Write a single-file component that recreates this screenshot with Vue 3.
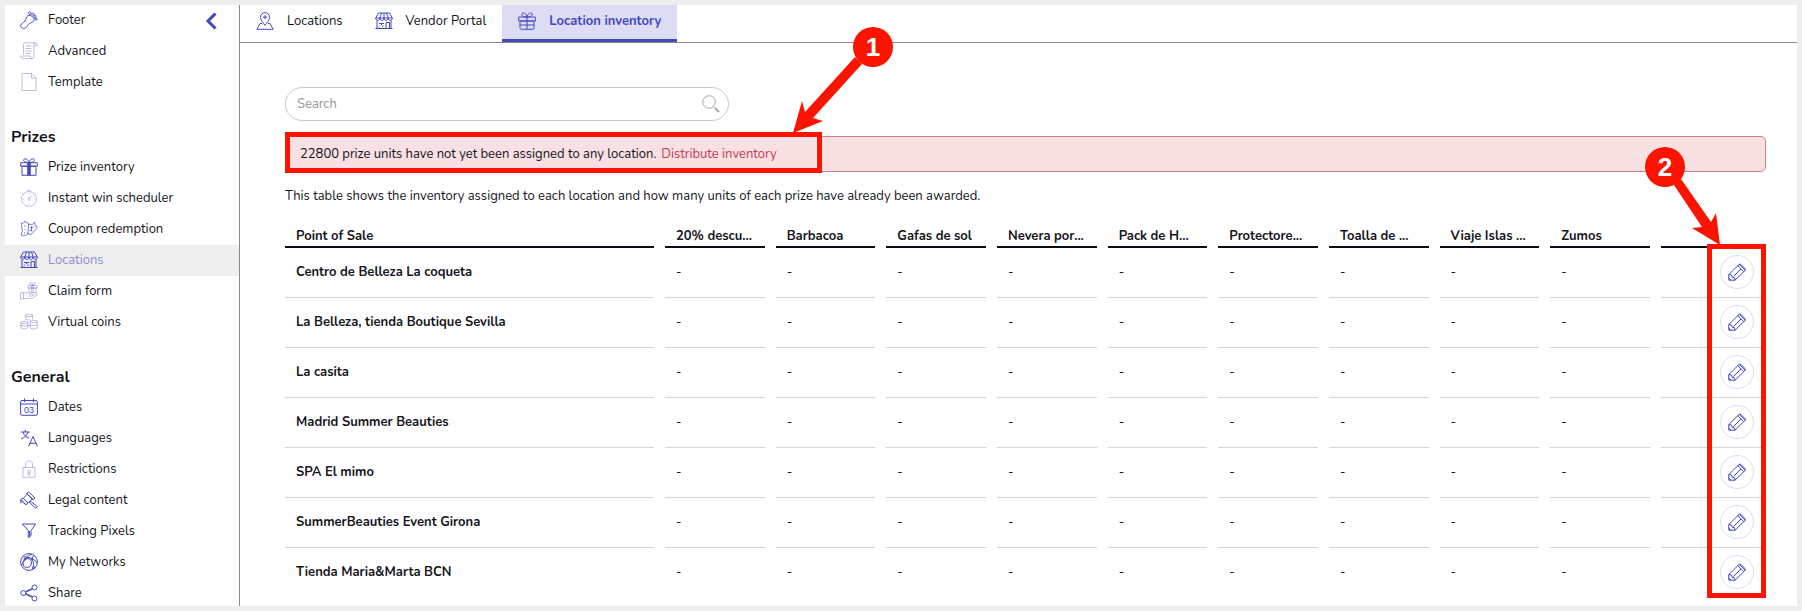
<template>
  <div class="app">
    <nav class="sidebar">
      <button class="collapse" type="button" aria-label="Collapse menu">
        <svg viewBox="0 0 12 18"><path d="M10.500 1.500 3 9l7.500 7.500" /></svg>
      </button>
      <section v-for="group in menu" :key="group.items[0].label" class="group">
        <h2 v-if="group.title">{{ group.title }}</h2>
        <ul>
          <li v-for="item in group.items" :key="item.label">
            <a href="#" :class="{ active: item.label === 'Locations' }">
              <svg class="icon" :class="item.tone" viewBox="0 0 18 18">
                <path :d="icons[item.icon]" />
                <text v-if="item.icon === 'calendar'" x="9" y="15">03</text>
              </svg>
              {{ item.label }}
            </a>
          </li>
        </ul>
      </section>
    </nav>

    <div class="content">
      <nav class="tabs">
        <a v-for="tab in tabs" :key="tab.label" href="#" :class="{ current: tab.current }">
          <svg class="icon" viewBox="0 0 18 18"><path :d="icons[tab.icon]" /></svg>
          {{ tab.label }}
        </a>
      </nav>

      <main>
        <form class="search" @submit.prevent>
          <input v-model="query" type="text" placeholder="Search" aria-label="Search" />
          <button type="submit" aria-label="Run search">
            <svg viewBox="0 0 18 18">
              <circle cx="7" cy="7" r="6.300" />
              <path d="m11.500 11.500 1.500 1.500" />
              <path class="handle" d="m13 13 4 4" />
            </svg>
          </button>
        </form>

        <div class="alert">
          <span>22800 prize units have not yet been assigned to any location.</span>
          <a href="#">Distribute inventory</a>
          <div class="mark mark-alert"></div>
          <svg class="arrow arrow-alert" viewBox="0 0 110 112">
            <path d="M8 109 17 77l3 11 50-55 7 7-49 54 10 3z" />
            <circle cx="88" cy="23" r="20" />
            <text x="88" y="32">1</text>
          </svg>
        </div>

        <p class="intro">
          This table shows the inventory assigned to each location and how many units of each prize have already been awarded.
        </p>

        <div class="inventory">
          <table>
            <thead>
              <tr>
                <th class="name">Point of Sale</th>
                <th v-for="prize in prizes" :key="prize">{{ prize }}</th>
                <th class="actions"></th>
              </tr>
            </thead>
            <tbody>
              <tr v-for="place in places" :key="place">
                <td class="name">{{ place }}</td>
                <td v-for="prize in prizes" :key="prize">-</td>
                <td class="actions">
                  <button type="button" :aria-label="'Edit ' + place">
                    <svg class="icon" viewBox="0 0 18 18"><path :d="icons.pencil" /></svg>
                  </button>
                </td>
              </tr>
            </tbody>
          </table>
          <div class="mark mark-edit"></div>
          <svg class="arrow arrow-edit" viewBox="0 0 100 110">
            <path d="M80 105 52 88l10-1-28-42 7-6 30 43 5-9z" />
            <circle cx="25" cy="27" r="20" />
            <text x="25" y="36">2</text>
          </svg>
        </div>
      </main>
    </div>
  </div>
</template>

<script setup>
import { ref } from "vue";

const query = ref("");

const menu = [
  {
    items: [
      { label: "Footer", icon: "foot" },
      { label: "Advanced", icon: "scroll", tone: "pale" },
      { label: "Template", icon: "page", tone: "pale" }
    ]
  },
  {
    title: "Prizes",
    items: [
      { label: "Prize inventory", icon: "giftBold" },
      { label: "Instant win scheduler", icon: "timer", tone: "pale" },
      { label: "Coupon redemption", icon: "coupon", tone: "soft" },
      { label: "Locations", icon: "store" },
      { label: "Claim form", icon: "claim", tone: "pale" },
      { label: "Virtual coins", icon: "coins", tone: "pale" }
    ]
  },
  {
    title: "General",
    items: [
      { label: "Dates", icon: "calendar" },
      { label: "Languages", icon: "languages" },
      { label: "Restrictions", icon: "lock", tone: "pale" },
      { label: "Legal content", icon: "gavel" },
      { label: "Tracking Pixels", icon: "funnel" },
      { label: "My Networks", icon: "network" },
      { label: "Share", icon: "share" }
    ]
  }
];

const tabs = [
  { label: "Locations", icon: "pin" },
  { label: "Vendor Portal", icon: "store" },
  { label: "Location inventory", icon: "gift", current: true }
];

const prizes = [
  "20% descu...",
  "Barbacoa",
  "Gafas de sol",
  "Nevera por...",
  "Pack de H...",
  "Protectore...",
  "Toalla de ...",
  "Viaje Islas ...",
  "Zumos"
];

const places = [
  "Centro de Belleza La coqueta",
  "La Belleza, tienda Boutique Sevilla",
  "La casita",
  "Madrid Summer Beauties",
  "SPA El mimo",
  "SummerBeauties Event Girona",
  "Tienda Maria&Marta BCN"
];

// line icons on an 18x18 grid
const icons = {
  foot: "M7 5.500C8.500 3.500 12 4.500 13.500 7c1.500 2.500-.5 4-3 5-2 1-2.500 2-3.500 3.700C5.500 18 1.500 18 .8 15.500c-.6-2 1-3 2.700-4C6 10 5.500 7.500 7 5.500zM8.500 1.500a1.400 1.400 0 1 1 2.500 1.300 1.400 1.400 0 1 1-2.500-1.300M12 2.700a1.100 1.100 0 1 1 2 1 1.100 1.100 0 1 1-2-1M14 5.200a1 1 0 1 1 2 .5 1 1 0 1 1-2-.5M15 8a1 1 0 1 1 2 .3 1 1 0 1 1-2-.3",
  scroll: "M3.500 12.500v-10c0-1 .6-1.700 1.500-1.700h10.500c1 0 1.700.8 1.700 2v1h-3M15.500.8c-1 0-1.600.8-1.600 2v12c0 1.200-.8 1.900-1.900 1.900-1.300 0-1.600-1.400-1.600-2.700H.8c0 1.700.6 2.700 2 2.700H12M5.500 4h6M5.500 6.500h6M5.500 9h6M5.500 11.500h5",
  page: "M2 .5h9.500L16 5v12.500H2zM11.500.5V5H16",
  gift: "M.7 5h16.600v4H.7zM2 9h14v6.800q0 1.500-1.500 1.500h-11Q2 17.300 2 15.800zM9 5v12.300M2 13h14M9 5C6 5 3.500 4 3.800 2.200 4.200 0 8 .5 9 5zM9 5c3 0 5.500-1 5.200-2.800C13.800 0 10 .5 9 5z",
  giftBold: "M.7 4.700h16.600v3.500H.7zM2 8.200h14v9.100H2zM7.700 4.700v12.600M8.500 4.700v12.600M9.500 4.700v12.600M10.300 4.700v12.600M9 4.500C6 4.500 3 3.500 3.600 1.900 4.300 0 8 .5 9 4.500zM9 4.500c3 0 6-1 5.400-2.600C13.700 0 10 .5 9 4.500z",
  timer: "M1.500 10a7.500 7.500 0 1 1 15 0 7.500 7.500 0 1 1-15 0M8 2.500V1.800a1 1 0 1 1 2 0v.7M8 10a1.200 1.200 0 1 1 2 .8A1.200 1.200 0 0 1 8 10M10 9l2.500-2.500M9 4v1M9 15v1M3 10h1M14 10h1M2.500 4.500l1 1M15.500 4.500l-1 1",
  coupon: "M1.500 3c1.200.8 2.500 0 2.700-1.500l3 1c0 .8.600 1.300 1.500 1L8 13l-2 2.800c-.8-1-2-.9-2.500 0L1 15l1-3c1-.6.800-1.500 0-2zM8.500 5 11 4c.3 1.200 1.800 1 2-.5l1.500-1.300.8 2.500c-.6 1 .3 2 1.300 1.500L17 8.500 11.500 14l-2.500.5c0-1.200-1-1.800-2-1M4 5.500l1.500 1M4.500 9l1 1M10 8l3.500-1M9.500 10.500l3 .5M11.500 6v5M4 12.500l1 .5",
  store: "M3.500 1h11l2.800 5H.7zM.7 6c0 3.200 4 3.200 4.100 0 .2 3.200 4.100 3.200 4.200 0 .1 3.200 4 3.200 4.200 0 .1 3.200 4.100 3.200 4.100 0M4.800 6l1.700-5M9 6V1M13.200 6l-1.700-5M2 8.500v8M16 8.500v8M.5 16.500h17M11 16.500v-6h3.500v6M4 11.500h5M4 14.500l1-1M6 13l1-1M7 15l1.500-1.500M4 16.500v-1",
  claim: "M.5 10.500h3v6.500h-3zM3.500 11.500c2-1.500 4-.8 5.500.5h2.500c1.500 0 1.500 2 0 2H8M12.500 13.500l3-1.700c1.500-.7 2.500.8 1 1.800L12 16.500H3.500M8 3.500h9V6H8zM9 6h7v4.500H9zM11.700 3.500v7M13.300 3.500v7M12.500 3.500C10 3.500 8.500.5 10.500.5c1 0 2 1.500 2 3 0-1.500 1-3 2-3 2 0 .5 3-2 3",
  coins: "M5.500 2.500c0-1.500 7-1.500 7 0s-7 1.500-7 0v3.200c0 1.200 3 1.500 4.500 1.200M12.500 2.500v4M.8 9.500c0-1.500 7-1.500 7 0s-7 1.500-7 0v5.200c0 1.500 7 1.500 7 0V9.500M.8 12c0 1.500 7 1.500 7 0M10.200 8.500c0-1.500 7-1.500 7 0s-7 1.500-7 0v6.200c0 1.500 7 1.500 7 0V8.500M10.200 11.500c0 1.500 7 1.500 7 0M7.800 12.500h2.400",
  calendar: "M2 2.500h14q1.400 0 1.400 1.400v12q0 1.400-1.400 1.400H2q-1.400 0-1.400-1.400v-12Q.6 2.500 2 2.500zM.6 6h16.800M4.500.5v3.500M13.500.5v3.500",
  languages: "M.8 3h9M5.300.8V3M8 3C7.500 5.500 5 8.500 1 10M2.700 3C4 6 6 8 9 9.200M8.500 17.500 13 7.500l4.500 10M10 14.300h6",
  lock: "M3 7.500h12v9.800H3zM5.500 7.500V4.300C5.500-.3 12.500-.3 12.500 4.300v3.200M7.700 11.500a1.300 1.300 0 1 1 2.600 0 1.300 1.300 0 1 1-2.600 0M8 13v1.800h2V13",
  gavel: "M1 8.500 3 7l5 5-2 1.800zM8.500.8 15 7l-2 1.700L6.500 2.500zM3.800 6.800l3.700-3.600M8.500 11.500 12 8M10 9.800l7.300 5.700-1.500 1.800L9 11M1 12.500l-.3-3.500M.6 8.800l5.200 5.100M6.700 2.300 13 8.500",
  funnel: "M2.300 2h13.400L11 8.500v5.200l-2.700 2V8.500zM9.600 9v5.500",
  network: "M.6 9a8.400 8.400 0 1 1 16.800 0A8.400 8.400 0 1 1 .6 9M3.500 4c3-.5 6 .5 8.500 2M12 1.200c-3 .8-5.500 2.500-7.200 5.300M12 6c2 3.500 2 7 .5 10.500M1.500 12.500C2.500 10 4 8 6 6M4.500 6.500c3-2.500 7-.5 7 3.500 0 3-2.500 4.500-5 4.500-3 0-5-4-2-8M12 6c2 .5 4 2 5 4M12 6l1.500-3.500M6 6a1 1 0 1 1-2 0 1 1 0 1 1 2 0M13 6a1 1 0 1 1-2 0 1 1 0 1 1 2 0M14.500 14.500a1 1 0 1 1-2 0 1 1 0 1 1 2 0",
  share: "M.8 9a2.500 2.500 0 1 1 5 0 2.500 2.500 0 1 1-5 0M12 3.500a2.500 2.500 0 1 1 5 0 2.500 2.500 0 1 1-5 0M12 14.500a2.500 2.500 0 1 1 5 0 2.500 2.500 0 1 1-5 0M5.500 7.500l6.700-3M5.800 8.200l6.700-3M5.500 10.200l6.700 3.100M5.800 9.600l6.700 3",
  pin: "M9 13.500C7 10.500 4.500 8 4.500 5.300c0-6.200 9-6.200 9 0C13.500 8 11 10.500 9 13.500zM9 3.200v4M7 5.200h4M6 11.500H4L.8 17.300h16.400L14 11.500h-2",
  pencil: "M.8 17.200V11.500L11 1.500q1-1 2 0l4 4q1 1 0 2L7 17.200zM.8 11.500l2.700.5.7 2.300 2.300.5.500 2.400M9.800 2.700l5.800 5.800M11.200 1.300l6 6M5.500 13.500l7.500-7.500M.8 15l2.200 2.200"
};
</script>

<style>
body {
  margin: 0;
}
</style>

<style scoped>
.app {
  display: flex;
  box-sizing: border-box;
  height: 100vh;
  overflow: hidden;
  border: 5px solid #eee;
  background: #fff;
  color: #15151c;
  font: 13px/20px Nunito, Lato, sans-serif;
}
a {
  color: inherit;
  text-decoration: none;
}
button {
  padding: 0;
  border: none;
  background: none;
  cursor: pointer;
}
.icon {
  flex: none;
  width: 18px;
  height: 18px;
  fill: none;
  stroke: #4349bb;
  stroke-width: 1;
  stroke-linejoin: round;
  overflow: visible;
}
.icon text {
  fill: #4349bb;
  stroke: none;
  font: 9px "Liberation Sans", sans-serif;
  text-anchor: middle;
}
.icon.soft { opacity: 0.7; }
.icon.pale { opacity: 0.35; }

/* sidebar */
.sidebar {
  position: relative;
  flex: none;
  width: 234px;
  border-right: 1px solid #88888c;
}
.collapse {
  position: absolute;
  top: 7px;
  right: 22px;
  width: 12px;
  height: 18px;
}
.collapse svg {
  display: block;
  fill: none;
  stroke: #4349bb;
  stroke-width: 3;
}
.group + .group {
  margin-top: 23px;
}
.group h2 {
  margin: 0;
  padding: 2px 0 0 6px;
  font-size: 16px;
  line-height: 29px;
}
.group ul {
  margin: 0;
  padding: 0;
  list-style: none;
}
.group a {
  display: flex;
  align-items: center;
  gap: 10px;
  box-sizing: border-box;
  height: 31px;
  padding: 0 0 2px 15px;
}
.group a.active {
  background: #eee;
  color: #918dd0;
}

/* tabs */
.content {
  flex: 1;
  min-width: 0;
}
.tabs {
  display: flex;
  border-bottom: 1px solid #88888c;
}
.tabs a {
  display: flex;
  align-items: center;
  gap: 13px;
  padding: 6px 16px 8px;
  border-bottom: 3px solid transparent;
}
.tabs a.current {
  border-color: #4349bb;
  background: #dddcf5;
  color: #4349bb;
  font-weight: bold;
}

main {
  padding: 44px 31px 0 45px;
}
.search {
  display: flex;
  align-items: center;
  box-sizing: border-box;
  width: 30%;
  height: 34px;
  padding: 0 8px 0 11px;
  border: 1px solid #c8c8ca;
  border-radius: 17px;
}
.search input {
  flex: 1;
  min-width: 0;
  padding: 0;
  border: none;
  outline: none;
  background: none;
  font: inherit;
}
.search input::placeholder {
  color: #96969a;
}
.search svg {
  display: block;
  width: 18px;
  height: 18px;
  fill: none;
  stroke: #a8a8a8;
}
.search .handle {
  stroke-width: 2;
}

.alert {
  position: relative;
  display: flex;
  gap: 5px;
  margin-top: 15px;
  padding: 7px 14px;
  border: 1px solid #d0808f;
  border-radius: 5px;
  background: #f8e0e3;
}
.alert a {
  color: #c73a50;
}
.intro {
  margin: 14px 0 20px;
}

/* inventory table */
.inventory {
  position: relative;
}
table {
  width: calc(100% + 22px);
  margin: 0 -11px;
  table-layout: fixed;
  border-spacing: 11px 0;
}
th,
td {
  overflow: hidden;
  padding: 0 11px;
  text-align: left;
  white-space: nowrap;
}
th {
  height: 20px;
  border-bottom: 2px solid #0c0c14;
}
td {
  height: 47px;
  padding-bottom: 2px;
  border-bottom: 1px solid #d5d5d7;
}
tr:last-child td {
  border-bottom-color: transparent;
}
thead tr:last-child th {
  border-bottom-color: #0c0c14;
}
.name {
  width: 347px;
  font-weight: bold;
}
.actions {
  width: 83px;
}
td.actions {
  padding-right: 12px;
}
td.actions button {
  display: flex;
  align-items: center;
  justify-content: center;
  width: 34px;
  height: 34px;
  margin-left: auto;
  border: 1px solid #dddcf5;
  border-radius: 50%;
}

/* callouts */
.mark {
  position: absolute;
  box-sizing: border-box;
  border: 5px solid #fb1400;
  pointer-events: none;
}
.mark-alert {
  top: -5px;
  left: -1px;
  width: 537px;
  height: 41px;
}
.mark-edit {
  top: 18px;
  right: 0;
  bottom: 0;
  width: 59px;
}
.arrow {
  position: absolute;
  fill: #fb1400;
  pointer-events: none;
}
.arrow text {
  fill: #fff;
  font: bold 26px "Liberation Sans", sans-serif;
  text-anchor: middle;
}
.arrow-alert {
  top: -113px;
  left: 499px;
  width: 110px;
  height: 112px;
}
.arrow-edit {
  top: -86px;
  right: 26px;
  width: 100px;
  height: 110px;
}
</style>
